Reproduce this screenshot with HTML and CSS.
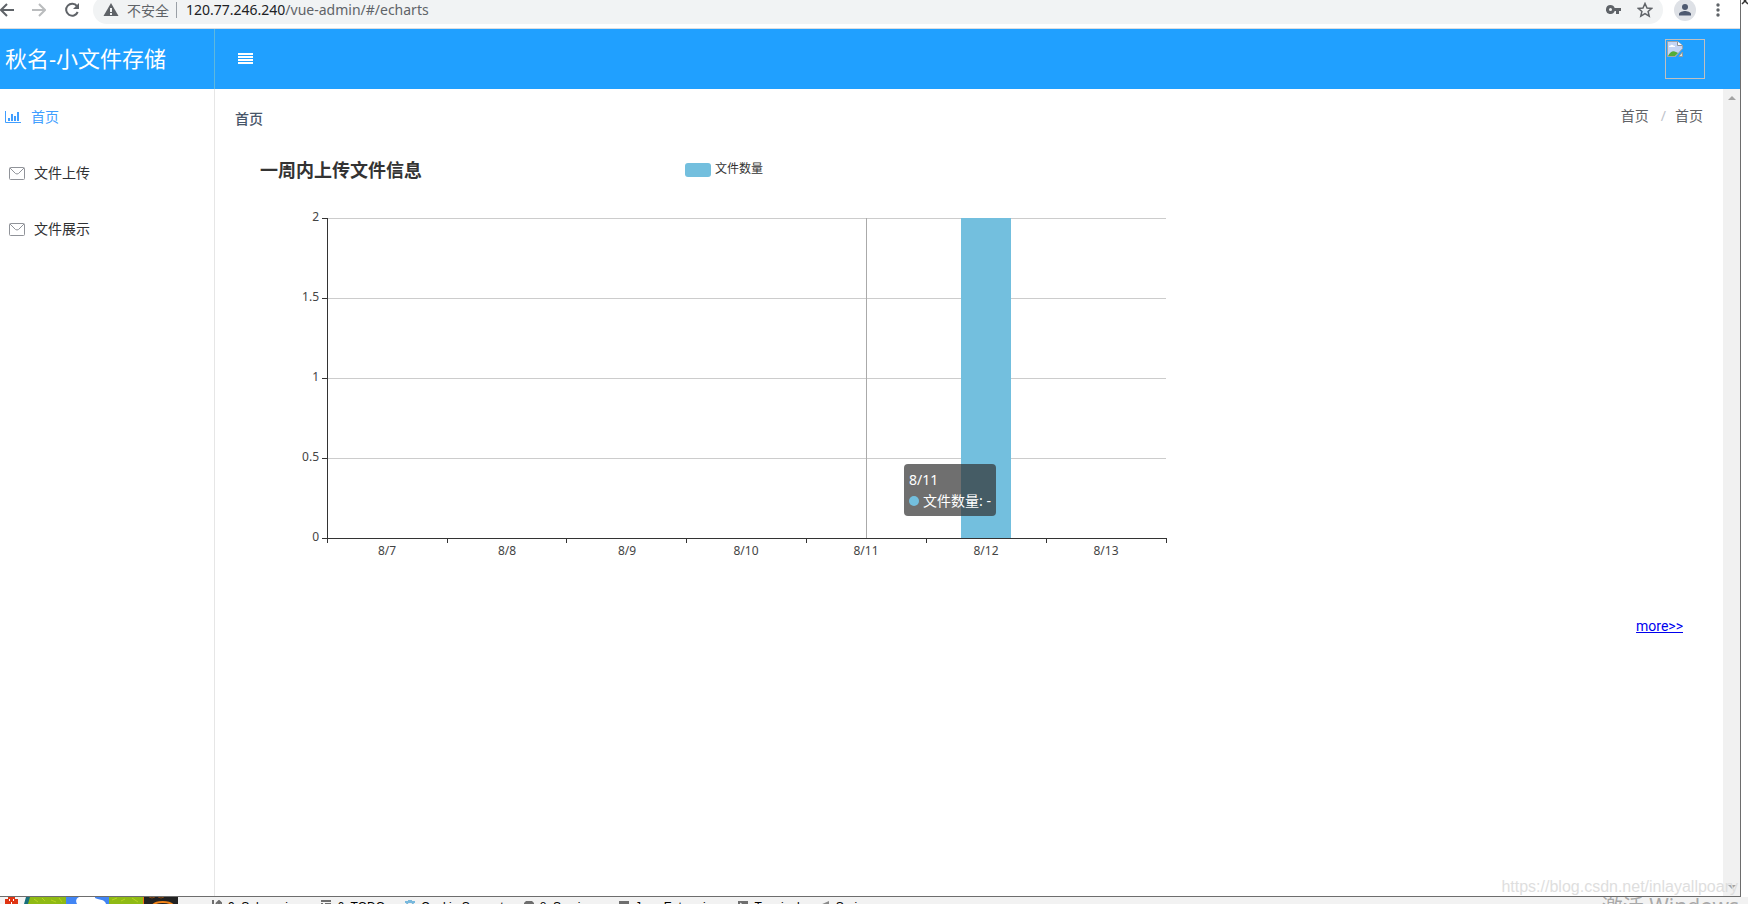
FILE: index.html
```html
<!DOCTYPE html>
<html lang="zh-CN">
<head>
<meta charset="utf-8">
<title>首页</title>
<link rel="stylesheet" href="styles.css">
</head>
<body>
<div class="desktop">
  <div class="workspace">
    <div class="browser">
      <div class="toolbar">
        <div class="nav-buttons">
          <button class="icon-button" aria-label="后退"><svg width="14" height="16" viewBox="0 0 14 16"><path d="M14 8H1M7 2L1 8l6 6" fill="none" stroke="#5f6368" stroke-width="2"/></svg></button>
          <button class="icon-button" aria-label="前进"><svg width="14" height="16" viewBox="0 0 14 16"><path d="M0 8h13M7 2l6 6-6 6" fill="none" stroke="#babcbe" stroke-width="2"/></svg></button>
          <button class="icon-button" aria-label="刷新"><svg width="16" height="16" viewBox="0 0 16 16"><path d="M13 4.200A6 6 0 1 0 13.700 10" fill="none" stroke="#5f6368" stroke-width="2"/><path d="M15 1v6H9z" fill="#5f6368"/></svg></button>
        </div>
        <div class="address-bar">
          <svg width="16" height="14" viewBox="0 0 16 14"><path d="M8 0L15.500 13H.5z" fill="#5f6368"/><path d="M8 5v4M8 10v2" stroke="#f1f3f4" stroke-width="2"/></svg>
          <span class="insecure">不安全</span>
          <span class="divider"></span>
          <span class="url"><span class="host">120.77.246.240</span>/vue-admin/#/echarts</span>
          <span class="address-actions">
            <button class="icon-button" aria-label="密码"><svg width="15" height="10" viewBox="0 0 15 10"><path d="M4.500 0a4.500 4.500 0 1 0 4.200 6H10v3h3V6h2V3H8.700A4.500 4.500 0 0 0 4.500 0zM4.500 3a1.500 1.500 0 1 1 0 3 1.500 1.500 0 0 1 0-3z" fill="#5f6368" fill-rule="evenodd"/></svg></button>
            <button class="icon-button" aria-label="收藏"><svg width="16" height="16" viewBox="0 0 16 16"><path d="M8 1.500l2 4.500 4.700.400-3.600 3.100 1.100 4.700L8 11.700l-4.200 2.500 1.100-4.700L1.300 6.400 6 6z" fill="none" stroke="#5f6368" stroke-width="1.500"/></svg></button>
          </span>
        </div>
        <button class="icon-button profile" aria-label="用户"><svg width="22" height="22" viewBox="0 0 22 22"><circle cx="11" cy="11" r="11" fill="#dee1e6"/><circle cx="11" cy="8" r="3" fill="#4d5970"/><path d="M5 16.500v-1.500c0-2 4-3 6-3s6 1 6 3v1.500z" fill="#4d5970"/></svg></button>
        <button class="icon-button" aria-label="菜单"><svg width="4" height="14" viewBox="0 0 4 14"><g fill="#5f6368"><circle cx="2" cy="2" r="1.700"/><circle cx="2" cy="7" r="1.700"/><circle cx="2" cy="12" r="1.700"/></g></svg></button>
      </div>

      <header class="header">
        <h1 class="brand">秋名-小文件存储</h1>
        <button class="icon-button collapse" aria-label="折叠菜单"><svg width="15" height="12" viewBox="0 0 15 12"><path d="M0 1h15M0 4h15M0 7h15M0 10h15" stroke="#fff" stroke-width="2"/></svg></button>
        <span class="avatar" role="img" aria-label="头像"><svg width="16" height="16" viewBox="0 0 16 16"><path d="M.500.500h10l5 4v3l-7 8h-8z" fill="#c5d5f5" stroke="#a0a4aa"/><path d="M10.500.500v4h5" fill="#fff" stroke="#8f9399"/><path d="M2 6c0-2 2-1 2-2 2-1 2 1 4 1v1z" fill="#fff"/><path d="M1 15c2-4 5-6 8-4l2 1-3 3z" fill="#55ad35"/><path d="M12 15l3.500-4v4.500H12z" fill="#d7e5d5" stroke="#999"/></svg></span>
      </header>

      <div class="page">
        <nav class="sidebar">
          <a class="menu-item active" href="#/echarts"><svg width="16" height="13" viewBox="0 0 16 13"><path d="M.500 0v11.500H16" fill="none" stroke="#409eff"/><path d="M4 10V7M7 10V3M10 10V5M13 10V1" stroke="#409eff" stroke-width="2"/></svg>首页</a>
          <a class="menu-item" href="#/upload"><svg width="16" height="13" viewBox="0 0 16 13"><rect x=".5" y=".5" width="15" height="12" rx="1" fill="none" stroke="#909399"/><path d="M1 1l5.500 5.500q1.500 1 3 0L15 1" fill="none" stroke="#909399"/></svg>文件上传</a>
          <a class="menu-item" href="#/files"><svg width="16" height="13" viewBox="0 0 16 13"><rect x=".5" y=".5" width="15" height="12" rx="1" fill="none" stroke="#909399"/><path d="M1 1l5.500 5.500q1.500 1 3 0L15 1" fill="none" stroke="#909399"/></svg>文件展示</a>
        </nav>
        <main class="content">
          <div class="title-row">
            <strong class="page-title">首页</strong>
            <div class="breadcrumb"><a href="#/">首页</a><span class="slash">/</span><a href="#/echarts">首页</a></div>
          </div>
          <div class="chart">
            <svg class="chart-canvas" width="960" height="420" viewBox="0 0 960 420" role="img" aria-label="一周内上传文件信息">
              <text class="chart-title" x="25" y="27">一周内上传文件信息</text>
              <rect x="450" y="13" width="26" height="14" rx="3" fill="#73bfde"/>
              <text class="legend" x="480" y="23">文件数量</text>
              <path class="grid" d="M92 68.500h839M92 148.500h839M92 228.500h839M92 308.500h839"/>
              <path class="pointer" d="M631.500 68v320"/>
              <rect x="726" y="68" width="50" height="320" fill="#73bfde"/>
              <path class="axis" d="M92.500 68v325M87 388.500h845M87 68.500h5M87 148.500h5M87 228.500h5M87 308.500h5M212.500 388v5M331.500 388v5M451.500 388v5M571.500 388v5M691.500 388v5M811.500 388v5M931.500 388v5"/>
              <g class="label y-label"><text x="84" y="71">2</text><text x="84" y="151">1.5</text><text x="84" y="231">1</text><text x="84" y="311">0.5</text><text x="84" y="391">0</text></g>
              <g class="label x-label"><text x="152" y="405">8/7</text><text x="272" y="405">8/8</text><text x="392" y="405">8/9</text><text x="511" y="405">8/10</text><text x="631" y="405">8/11</text><text x="751" y="405">8/12</text><text x="871" y="405">8/13</text></g>
            </svg>
            <div class="tooltip">8/11<br><span class="dot"></span>文件数量: -</div>
          </div>
          <a class="more" href="#/files">more&gt;&gt;</a>
        </main>
        <div class="scrollbar"><span class="arrow up"></span><span class="arrow down"></span></div>
      </div>
    </div>
    <div class="behind"><svg width="7" height="5" viewBox="0 0 7 5"><path d="M1 4l4-4M3 0l4 4" stroke="#333" stroke-width="1.500"/></svg></div>
  </div>

  <div class="taskbar">
    <svg class="wallpaper" width="178" height="7" viewBox="0 0 178 7">
      <path fill="#f4f4f4" d="M0 0h30v7H0z"/><path fill="#df3412" d="M5 2h3V0h7v2h3v5H5z"/><path fill="#fff" d="M9 2h1v2H9zM13 2h1v2h-1zM11 5h1v2h-1z"/>
      <path fill="#176f7c" d="M26 0h4v7h-6z"/><path fill="#8fba14" d="M30 0h36v7H28zM109 0h35v7h-35z"/>
      <path stroke="#b5d31f" d="M34 2l4 3M42 1l3 3M51 3l5 2M59 1l3 4M112 3l5-2M121 4l4-2M132 1l6 4"/>
      <path fill="#4285f4" d="M66 0h43v7H66z"/><path fill="#fff" d="M77 7c-2-4 0-6 2-7h16c-1 3 10 1 11 7z"/>
      <path fill="#222" d="M144 0h34v7h-34z"/><path stroke="#f36d16" d="M143.500 0v7"/><path d="M153 8c3-4 16-4 20 0" fill="none" stroke="#f58518" stroke-width="2"/><path d="M149 0q3 2 6 0M158 0q3 2 6 0" fill="none" stroke="#8a4a12"/>
    </svg>
    <div class="tools">
      <span class="tool"><svg width="10" height="7"><path d="M1 0v7M7 2v5M4 4l3-3 3 3" stroke="#6e6e6e" stroke-width="2" fill="none"/></svg>9: Subversion</span>
      <span class="tool"><svg width="10" height="7"><path d="M0 1h10M0 4h2M4 4h6" stroke="#6e6e6e" stroke-width="2"/></svg>6: TODO</span>
      <span class="tool"><svg width="10" height="7"><path d="M0 2h10M3 1h4M2 3l1 4M8 3L7 7" stroke="#78b8dc" stroke-width="2"/></svg>Cookie Support</span>
      <span class="tool"><svg width="10" height="7"><path d="M0 7V3l2-2h6l2 2v4z" fill="#6e6e6e"/></svg>8: Services</span>
      <span class="tool"><svg width="10" height="7"><path d="M0 1h10v6H0z" fill="#6e6e6e"/></svg>Java Enterprise</span>
      <span class="tool"><svg width="10" height="7"><path d="M0 1h10v6H0z" fill="#6e6e6e"/><path d="M2 3l3 2" stroke="#fff"/></svg>Terminal</span>
      <span class="tool"><svg width="10" height="7"><path d="M0 5l9-4v6H3z" fill="#8a8a8a"/></svg>Spring</span>
    </div>
  </div>
  <div class="watermark">https://blog.csdn.net/inlayallpoary</div>
  <div class="activation">激活 Windows</div>
</div>
</body>
</html>
```
FILE: styles.css
```css
* { box-sizing: border-box; }
body { margin: 0; font-family: "Noto Sans", "Noto Sans CJK SC", sans-serif; font-size: 14px; color: #303133; }
.desktop { position: relative; display: flex; flex-direction: column; height: 100vh; overflow: hidden; background: #fff; }
.workspace { display: flex; flex: 1; min-height: 0; }
.browser { display: flex; flex: 1; flex-direction: column; min-width: 0; border-right: 1px solid #6d6d6d; border-bottom: 1px solid #6d6d6d; }
.behind { width: 7px; line-height: 0; }
.icon-button { display: flex; align-items: center; padding: 0; border: 0; background: none; }

.toolbar { display: flex; align-items: center; height: 29px; padding: 0 20px 9px 0; border-bottom: 1px solid #dadce0; }
.nav-buttons { display: flex; gap: 18px; width: 93px; }
.address-bar { display: flex; flex: 1; align-items: center; height: 28px; padding: 0 10px; border-radius: 14px; background: #f1f3f4; white-space: nowrap; color: #5f6368; }
.toolbar .icon-button { flex: none; }
.insecure { margin-left: 8px; }
.divider { width: 1px; height: 16px; margin: 0 9px 0 7px; background: #9aa0a6; }
.url { font-size: 14px; }
.host { color: #202124; }
.address-actions { display: flex; gap: 16px; align-items: center; margin-left: auto; }
.profile { margin: 0 20px 0 11px; }

.header { display: flex; flex: none; align-items: center; height: 60px; padding-right: 35px; background: #20a0ff; color: #fff; }
.brand { width: 215px; height: 60px; margin: 0; padding-left: 5px; border-right: 1px solid rgba(238, 241, 146, 0.3); font-size: 22px; font-weight: 400; line-height: 58px; }
.collapse { margin-left: 23px; }
.avatar { width: 40px; height: 40px; margin-left: auto; padding: 1px; border: 1px solid #c0c0c0; line-height: 0; }

.page { display: flex; flex: 1; min-height: 0; }
.sidebar { width: 215px; border-right: 1px solid #e6e6e6; }
.menu-item { display: flex; align-items: center; gap: 9px; height: 56px; padding: 0 0 2px 9px; color: #303133; text-decoration: none; }
.menu-item.active { gap: 10px; padding-left: 5px; color: #409eff; }
.menu-item svg { margin-top: 2px; }
.content { display: flex; flex: 1; flex-direction: column; min-width: 0; padding: 16px 20px; }
.title-row { display: flex; justify-content: space-between; line-height: 22px; }
.page-title { padding-top: 3px; color: #475669; font-weight: 500; }
.breadcrumb { display: flex; gap: 9px; }
.breadcrumb a { color: #606266; text-decoration: none; }
.slash { padding-left: 3px; color: #c0c4cc; }

.chart { position: relative; margin-top: 20px; }
.chart-canvas { display: block; }
.chart-title { font-size: 18px; font-weight: 700; fill: #333; }
.legend { font-size: 12px; fill: #333; }
.label { font-size: 12px; fill: #444; }
.y-label { text-anchor: end; }
.x-label { text-anchor: middle; }
.grid { stroke: #ccc; }
.axis { fill: none; stroke: #333; }
.pointer { stroke: #aaa; }
.tooltip { position: absolute; left: 669px; top: 314px; padding: 5px; border-radius: 4px; background: rgba(50, 50, 50, 0.7); color: #fff; line-height: 21px; white-space: nowrap; }
.dot { display: inline-block; width: 10px; height: 10px; margin-right: 4px; border-radius: 50%; background: #73bfde; }
.more { align-self: flex-end; margin: 44px 20px 0 0; color: #00e; font-family: Roboto, sans-serif; line-height: 24px; }

.scrollbar { display: flex; flex-direction: column; justify-content: space-between; align-items: center; width: 17px; padding: 7px 0; background: #f1f1f1; }
.arrow { width: 0; border: 4px solid transparent; }
.up { border-top: 0; border-bottom-color: #a3a3a3; }
.down { border-bottom: 0; border-top-color: #a3a3a3; }

.taskbar { display: flex; flex: none; height: 7px; overflow: hidden; background: #f2f2f2; }
.wallpaper { flex: none; }
.tools { display: flex; gap: 20px; padding: 0 34px; color: #000; font-family: "Liberation Sans", sans-serif; font-size: 12px; line-height: 14px; white-space: nowrap; }
.tool { display: flex; gap: 6px; padding-top: 3px; }
.tool svg { flex: none; }
.watermark { position: absolute; right: 10px; bottom: 7px; color: #dedede; font: 16px/20px "Liberation Sans", sans-serif; }
.activation { position: absolute; right: 9px; bottom: -18px; color: rgba(120, 120, 120, 0.6); font-size: 21px; line-height: 32px; }
```
